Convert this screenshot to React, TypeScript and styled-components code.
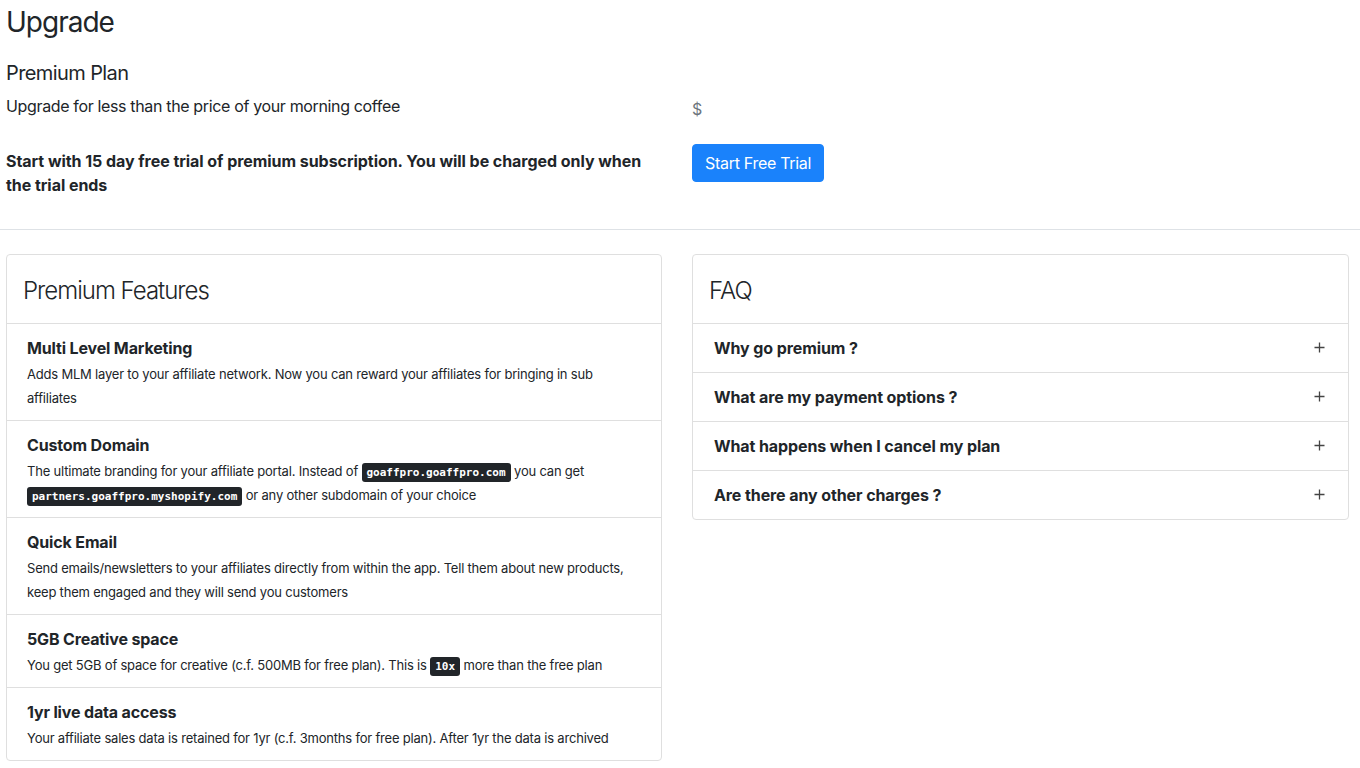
import styled, { createGlobalStyle } from "styled-components";

const GlobalStyle = createGlobalStyle`
  html, body {
    margin: 0;
    padding: 0;
    background: #fff;
  }
  body {
    font-family: Inter, "Liberation Sans", Arial, sans-serif;
    font-size: 16px;
    line-height: 1.5;
    color: #212529;
  }
  * {
    box-sizing: border-box;
  }
`;

const Page = styled.div`
  padding: 0 11px 0 6px;
`;

const Title = styled.h1`
  margin: 0;
  padding-top: 6px;
  font-size: 28px;
  font-weight: 400;
  letter-spacing: -1px;
  line-height: 1.2;
`;

const Row = styled.div`
  display: grid;
  grid-template-columns: 656px 657px;
  column-gap: 30px;
  align-items: start;
`;

const PlanName = styled.h2`
  margin: 21px 0 9px;
  font-size: 20px;
  font-weight: 400;
  letter-spacing: -0.6px;
  line-height: 1.2;
`;

const Lead = styled.p`
  margin: 0 0 31px;
  letter-spacing: -0.35px;
`;

const Strong = styled.p`
  margin: 0;
  font-weight: 700;
  letter-spacing: -0.05px;
`;

const Price = styled.div`
  margin-top: 57px;
  color: #6c757d;
  height: 24px;
`;

const Action = styled.div`
  margin-top: 23px;
`;

const Button = styled.button`
  font-family: inherit;
  font-size: 16px;
  line-height: 1.5;
  letter-spacing: -0.3px;
  color: #fff;
  background: #1a82fb;
  border: 1px solid #1a82fb;
  border-radius: 4px;
  padding: 6px 12px;
`;

const Divider = styled.hr`
  margin: 32px -11px 24px -6px;
  border: 0;
  border-top: 1px solid #dee2e6;
`;

const Card = styled.div`
  border: 1px solid #dfdfdf;
  border-radius: 4px;
  background: #fff;
`;

const CardHeader = styled.div`
  padding: 22px 16px 18px;
  font-size: 24px;
  font-weight: 300;
  letter-spacing: -1px;
  line-height: 28px;
  border-bottom: 1px solid #dfdfdf;
`;

const Item = styled.div`
  padding: 12px 20px 10px;
  & + & {
    border-top: 1px solid #dfdfdf;
  }
`;

const ItemTitle = styled.div`
  font-weight: 700;
  letter-spacing: -0.15px;
  line-height: 24px;
`;

const ItemText = styled.div`
  padding-top: 2px;
  font-size: 13px;
  letter-spacing: -0.2px;
  line-height: 24px;
`;

const Kbd = styled.kbd`
  font-family: "DejaVu Sans Mono", "Liberation Mono", monospace;
  font-size: 11px;
  font-weight: 700;
  letter-spacing: 0;
  line-height: 1;
  color: #fff;
  background: #212529;
  border-radius: 3px;
  padding: 3px 5px;
`;

const FaqRow = styled.div`
  display: flex;
  align-items: center;
  justify-content: space-between;
  padding: 12px 20px 12px 21px;
  font-weight: 700;
  letter-spacing: -0.1px;
  line-height: 24px;
  & + & {
    border-top: 1px solid #dfdfdf;
  }
`;

const Plus = styled.span`
  display: flex;
  color: #444;
  margin-right: 3px;
`;

const features = [
  {
    title: "Multi Level Marketing",
    text: (
      <>
        Adds MLM layer to your affiliate network. Now you can reward your
        affiliates for bringing in sub affiliates
      </>
    ),
  },
  {
    title: "Custom Domain",
    text: (
      <>
        The ultimate branding for your affiliate portal. Instead of{" "}
        <Kbd>goaffpro.goaffpro.com</Kbd> you can get{" "}
        <Kbd>partners.goaffpro.myshopify.com</Kbd> or any other subdomain of
        your choice
      </>
    ),
  },
  {
    title: "Quick Email",
    text: (
      <>
        Send emails/newsletters to your affiliates directly from within the
        app. Tell them about new products, keep them engaged and they will send
        you customers
      </>
    ),
  },
  {
    title: "5GB Creative space",
    text: (
      <>
        You get 5GB of space for creative (c.f. 500MB for free plan). This is{" "}
        <Kbd>10x</Kbd> more than the free plan
      </>
    ),
  },
  {
    title: "1yr live data access",
    text: (
      <>
        Your affiliate sales data is retained for 1yr (c.f. 3months for free
        plan). After 1yr the data is archived
      </>
    ),
  },
];

const faqs = [
  "Why go premium ?",
  "What are my payment options ?",
  "What happens when I cancel my plan",
  "Are there any other charges ?",
];

const PlusIcon = () => (
  <svg width="11" height="11" viewBox="0 0 11 11">
    <path d="M5.5 0.5v10M0.5 5.5h10" stroke="currentColor" strokeWidth="1.3" />
  </svg>
);

export default function App() {
  return (
    <>
      <GlobalStyle />
      <Page>
        <Title>Upgrade</Title>
        <Row>
          <div>
            <PlanName>Premium Plan</PlanName>
            <Lead>Upgrade for less than the price of your morning coffee</Lead>
            <Strong>
              Start with 15 day free trial of premium subscription. You will be
              charged only when the trial ends
            </Strong>
          </div>
          <div>
            <Price>$</Price>
            <Action>
              <Button>Start Free Trial</Button>
            </Action>
          </div>
        </Row>
        <Divider />
        <Row>
          <Card>
            <CardHeader>Premium Features</CardHeader>
            {features.map((f) => (
              <Item key={f.title}>
                <ItemTitle>{f.title}</ItemTitle>
                <ItemText>{f.text}</ItemText>
              </Item>
            ))}
          </Card>
          <Card>
            <CardHeader>FAQ</CardHeader>
            {faqs.map((q) => (
              <FaqRow key={q}>
                {q}
                <Plus>
                  <PlusIcon />
                </Plus>
              </FaqRow>
            ))}
          </Card>
        </Row>
      </Page>
    </>
  );
}
